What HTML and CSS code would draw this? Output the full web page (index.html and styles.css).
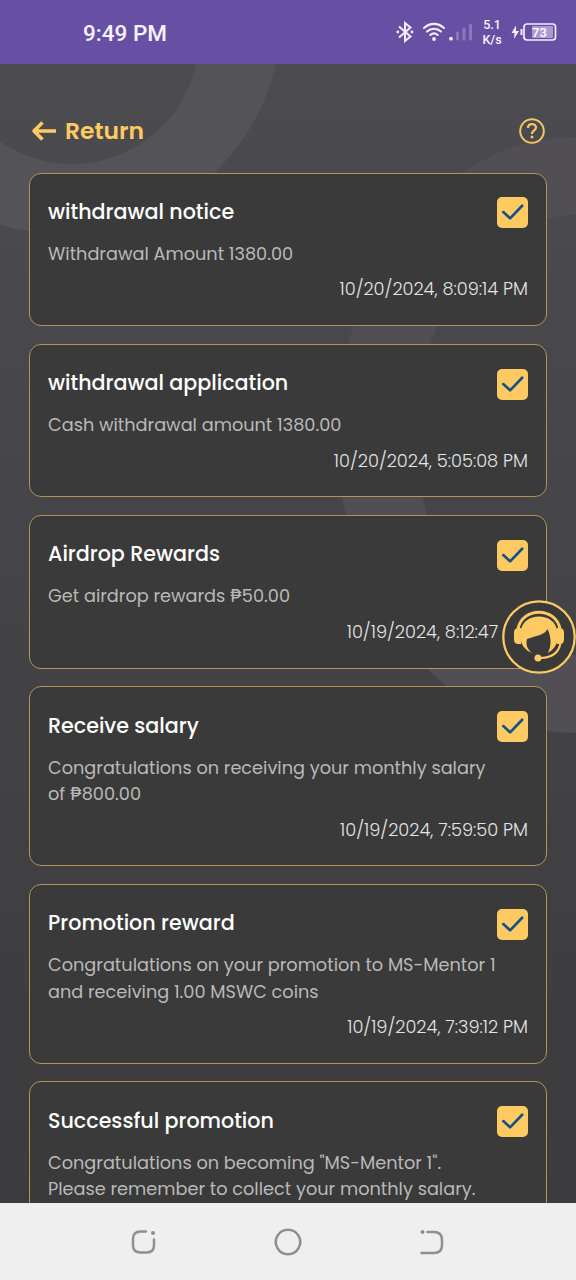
FILE: index.html
```html
<!DOCTYPE html>
<html lang="en">
<head>
<meta charset="utf-8">
<title>Messages</title>
<link rel="stylesheet" href="styles.css">
</head>
<body>
<header class="status">
  <span class="clock">9:49 PM</span>
  <div class="status-icons">
    <svg class="bt" width="18" height="22" viewBox="0 0 18 22" fill="none" stroke="#f3eefb" stroke-width="2"><path d="M3 5.500L14.500 15.500 9 20V2l5.500 4.500L3 16.500"/><circle cx="1.800" cy="11" r="1.400" fill="#f3eefb" stroke="none"/><circle cx="16" cy="11" r="1.400" fill="#f3eefb" stroke="none"/></svg>
    <svg class="wifi" width="24" height="20" viewBox="0 0 24 20" fill="none" stroke="#f3eefb" stroke-width="2.100" stroke-linecap="round"><path d="M2 6C8 .5 16 .5 22 6M5 9.600c4-3.800 10-3.800 14 0M8.300 13c2.400-2 5-2 7.400 0"/><circle cx="12" cy="17" r="1.900" fill="#f3eefb" stroke="none"/></svg>
    <svg class="signal" width="24" height="18" viewBox="0 0 24 18" fill="none" stroke-width="3" stroke-linecap="round" stroke="#8c77bb"><path d="M8.500 10v6M15 6v10M21.500 2v14"/><circle cx="2" cy="15.700" r="1.900" fill="#f3eefb" stroke="none"/></svg>
    <div class="speed"><span>5.1</span><span>K/s</span></div>
    <svg class="battery" width="46" height="20" viewBox="0 0 46 20"><path d="M5 3.500L.5 11h3L3 17l5-8H5z" fill="#f3eefb"/><path d="M10.500 7v6" stroke="#f3eefb" stroke-width="2"/><rect x="13" y="2" width="31.500" height="16" rx="3" fill="none" stroke="#f3eefb" stroke-width="1.700"/><rect x="21" y="4" width="21" height="12" rx="1" fill="#a99ad0"/><text x="28.500" y="14.700" text-anchor="middle" class="level">73</text></svg>
  </div>
</header>

<main class="page">
  <svg class="backdrop" width="576" height="1139" viewBox="0 64 576 1139" fill="#545358" fill-rule="evenodd">
    <path d="M-158 14a220 220 0 1 0 440 0a220 220 0 1 0-440 0zM-55 37a127 127 0 1 0 254 0a127 127 0 1 0-254 0z"/>
    <path class="ring-low" d="M337 435a238 298 0 1 0 476 0a238 298 0 1 0-476 0zM416 435a160 220 0 1 0 320 0a160 220 0 1 0-320 0z"/>
  </svg>
  <div class="topbar">
    <a class="back"><svg width="26" height="20" viewBox="0 0 26 20" fill="none" stroke="#ffca61" stroke-width="3.600"><path d="M25 10H3M11.500 1.500L3 10l8.500 8.500" stroke-linejoin="round"/></svg><span>Return</span></a>
    <svg class="help" width="26" height="26" viewBox="0 0 26 26" fill="none" stroke="#f5c664" stroke-width="2"><circle cx="13" cy="13" r="11.800"/><path d="M9 10c0-5 8-5 8-.5 0 3-4 3-4 6.500" stroke-width="2.200"/><circle cx="13" cy="19" r="1.500" fill="#f5c664" stroke="none"/></svg>
  </div>

  <section class="card">
    <div class="head"><h2>withdrawal notice</h2><span class="check"><svg viewBox="0 0 32 32"><path d="M6.500 15.500L13.500 22 26 9"/></svg></span></div>
    <p>Withdrawal Amount 1380.00</p>
    <time>10/20/2024, 8:09:14 PM</time>
  </section>
  <section class="card">
    <div class="head"><h2>withdrawal application</h2><span class="check"><svg viewBox="0 0 32 32"><path d="M6.500 15.500L13.500 22 26 9"/></svg></span></div>
    <p>Cash withdrawal amount 1380.00</p>
    <time>10/20/2024, 5:05:08 PM</time>
  </section>
  <section class="card">
    <div class="head"><h2>Airdrop Rewards</h2><span class="check"><svg viewBox="0 0 32 32"><path d="M6.500 15.500L13.500 22 26 9"/></svg></span></div>
    <p>Get airdrop rewards ₱50.00</p>
    <time>10/19/2024, 8:12:47 PM</time>
  </section>
  <section class="card">
    <div class="head"><h2>Receive salary</h2><span class="check"><svg viewBox="0 0 32 32"><path d="M6.500 15.500L13.500 22 26 9"/></svg></span></div>
    <p>Congratulations on receiving your monthly salary<br>of ₱800.00</p>
    <time>10/19/2024, 7:59:50 PM</time>
  </section>
  <section class="card">
    <div class="head"><h2>Promotion reward</h2><span class="check"><svg viewBox="0 0 32 32"><path d="M6.500 15.500L13.500 22 26 9"/></svg></span></div>
    <p>Congratulations on your promotion to MS-Mentor 1<br>and receiving 1.00 MSWC coins</p>
    <time>10/19/2024, 7:39:12 PM</time>
  </section>
  <section class="card">
    <div class="head"><h2>Successful promotion</h2><span class="check"><svg viewBox="0 0 32 32"><path d="M6.500 15.500L13.500 22 26 9"/></svg></span></div>
    <p>Congratulations on becoming "MS-Mentor 1".<br>Please remember to collect your monthly salary.</p>
  </section>
</main>

<svg class="support" width="74" height="74" viewBox="0 0 74 74">
  <circle cx="37" cy="37" r="35.700" fill="#3a3a3a" stroke="#ffca61" stroke-width="2.300"/>
  <g fill="#ffca61">
    <path d="M16 29C20 6.500 54 6.500 58 29" fill="none" stroke="#ffca61" stroke-width="3"/>
    <path d="M19 28v16h-2.500q-4.500 0-4.500-4.500v-7q0-4.500 4.500-4.500zM55 28v16h2.500q4.500 0 4.500-4.500v-7q0-4.500-4.500-4.500z"/>
    <path d="M18.500 32C20 21 28 16.500 37 16.500S54 21 55.500 32V41C54 46 51 50 46 53C49 47 50 38 45.500 29C43 35 33 36 25 39C23.500 44 25 49 30 53C23 50 19 45 18.500 38z"/>
    <path d="M58.500 43C57 52 50 57.500 39 58" fill="none" stroke="#ffca61" stroke-width="2"/>
    <circle cx="36" cy="58" r="3.500"/>
  </g>
</svg>

<footer class="nav">
  <svg width="26" height="26" viewBox="0 0 26 26"><path d="M15 2.500H9.500Q2 2.500 2 10v6q0 7.500 7.500 7.500h6q7.500 0 7.500-7.500V10.500"/><circle cx="22" cy="4" r="2"/></svg>
  <svg width="28" height="28" viewBox="0 0 28 28"><path d="M14 1.800a12.200 12.200 0 1 0 .01 0z"/></svg>
  <svg width="26" height="26" viewBox="0 0 26 26"><path d="M8.500 3H15q8 0 8 8v5q0 8-8 8H2.500"/><circle cx="3.500" cy="3" r="2"/></svg>
</footer>
</body>
</html>
```
FILE: styles.css
```css
* { box-sizing: border-box; }
body {
  margin: 0;
  width: 576px;
  height: 1280px;
  display: flex;
  flex-direction: column;
  overflow: hidden;
  position: relative;
  font-family: Poppins, Inter, "Open Sans", sans-serif;
}
svg { display: block; flex: none; }

.status {
  height: 64px;
  flex: none;
  display: flex;
  align-items: center;
  justify-content: space-between;
  padding: 0 19px 0 83px;
  background: #6750a4;
  color: #f7f2fd;
  font-family: Roboto, sans-serif;
}
.clock { font-size: 22.500px; font-weight: 500; padding-top: 1px; }
.status-icons { display: flex; align-items: center; }
.bt { margin-right: 0; }
.wifi { margin-left: 8px; }
.signal { margin-left: 3px; }
.speed {
  display: flex;
  flex-direction: column;
  width: 22px;
  margin: 0 8px 0 8px;
  text-align: center;
  font-size: 12.5px;
  font-weight: 500;
  line-height: 15px;
}
.level { font: 500 13px Roboto, sans-serif; fill: #fff; }

.page {
  height: 1139px;
  flex: none;
  overflow: hidden;
  position: relative;
  padding: 0 29px;
  background: linear-gradient(#4c4b50, #3b3b3d);
}
.backdrop { position: absolute; left: 0; top: 0; }
.ring-low { fill: #514f54; }
.topbar {
  position: relative;
  height: 108.600px;
  padding: 25px 2px 0 2px;
  display: flex;
  align-items: center;
  justify-content: space-between;
}
.back {
  display: flex;
  align-items: center;
  gap: 8px;
  color: #ffca61;
  font-size: 23.450px;
  font-weight: 600;
  line-height: 34px;
}

.card {
  position: relative;
  min-height: 153.500px;
  margin-bottom: 17.800px;
  padding: 23.300px 18px 22.100px 18px;
  border: 1px solid #b09459;
  border-radius: 12px;
  background: #3a3a3a;
}
.head { display: flex; justify-content: space-between; height: 44px; }
h2 {
  margin: 0;
  font-size: 20.650px;
  font-weight: 500;
  line-height: 30px;
  color: #fff;
  white-space: nowrap;
}
.check {
  width: 31px;
  height: 31px;
  margin-top: .5px;
  border-radius: 5px;
  background: #ffca61;
}
.check path {
  fill: none;
  stroke: #11508c;
  stroke-width: 2.700;
  stroke-linecap: round;
  stroke-linejoin: round;
}
.card p {
  margin: 0;
  font-size: 17.720px;
  line-height: 26.400px;
  color: #b9b9b9;
  white-space: nowrap;
}
time {
  display: block;
  margin-top: 9px;
  text-align: right;
  font-size: 17.750px;
  font-weight: 300;
  line-height: 26.400px;
  color: #e4e4e4;
}

.support { position: absolute; left: 502px; top: 600px; }

.nav {
  height: 77px;
  flex: none;
  display: flex;
  align-items: center;
  justify-content: space-between;
  padding: 0 131px;
  background: #efefef;
}
.nav path { fill: none; stroke: #8f8f8f; stroke-width: 2.500; stroke-linecap: round; }
.nav circle { fill: #8f8f8f; }
```
